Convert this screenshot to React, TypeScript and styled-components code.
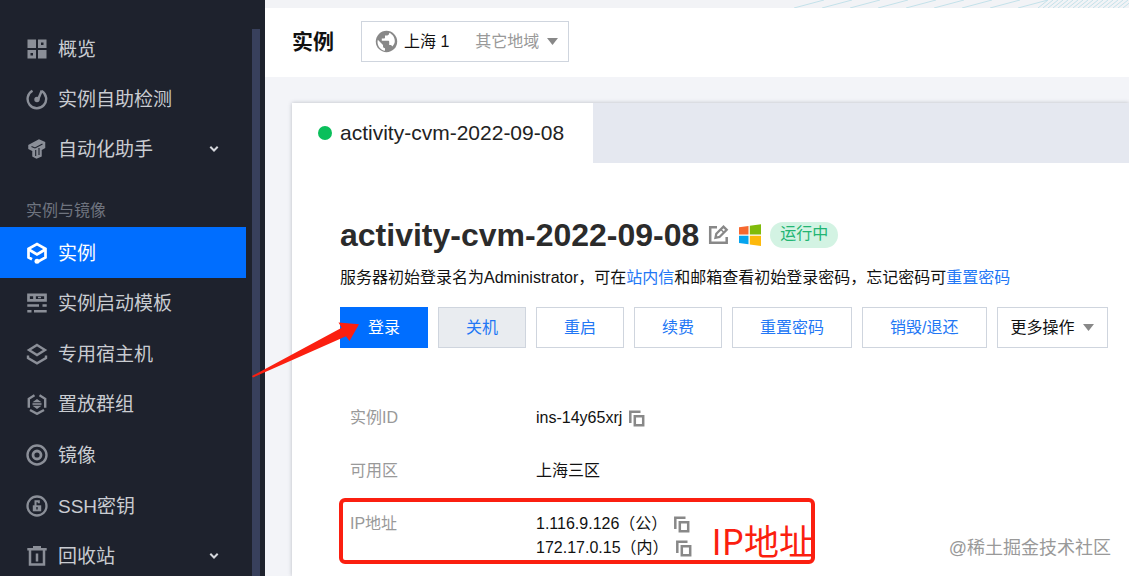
import React from "react";
import styled, { createGlobalStyle } from "styled-components";

const GlobalStyle = createGlobalStyle`
  * { box-sizing: border-box; }
  body {
    margin: 0;
    font-family: "Liberation Sans", "Noto Sans CJK SC", sans-serif;
    font-size: 16px;
    line-height: 24px;
    color: #111;
    background: #f3f4f8;
  }
  h1, h2, p, ul, dl, dd { margin: 0; padding: 0; }
  ul { list-style: none; }
  a { color: #2277f5; text-decoration: none; }
  button, select { font: inherit; cursor: pointer; }
  svg { display: block; flex: none; }
`;

const Page = styled.div`
  position: relative;
  display: flex;
  height: 100vh;
  overflow: hidden;
`;

/* Sidebar */

const Sidebar = styled.aside`
  display: flex;
  flex: none;
  gap: 6px;
  padding-right: 5px;
  background: #1e222d;
`;

const Nav = styled.nav`
  width: 246px;
  padding-top: 23px;
`;

const ScrollThumb = styled.div`
  width: 8px;
  margin-top: 29px;
  background: #38405c;
`;

const NavGroup = styled.ul<{ $height: number }>`
  display: grid;
  grid-auto-rows: 1fr;
  min-height: ${(p) => p.$height}px;
`;

const GroupTitle = styled.h2`
  height: 54px;
  padding: 26px 26px 0;
  font-size: 16px;
  font-weight: 400;
  color: #6f747f;
`;

const NavLink = styled.a<{ $active?: boolean }>`
  display: flex;
  align-items: center;
  gap: 10px;
  height: 100%;
  padding: 1px 26px 0;
  font-size: 19px;
  color: ${(p) => (p.$active ? "#fff" : "#c9ccd1")};
  background: ${(p) => (p.$active ? "#006eff" : "transparent")};

  > svg:first-child { color: ${(p) => (p.$active ? "#fff" : "#8b8f98")}; }
  > svg:last-child { margin-left: auto; }
  > span { padding-top: 2px; }
`;

/* Main area */

const Main = styled.main`
  display: flex;
  flex: 1;
  flex-direction: column;
  min-width: 0;
`;

const Banner = styled.div`
  display: flex;
  flex: none;
  justify-content: flex-end;
  height: 8px;
  overflow: hidden;
  background: #f2f3f6;
`;

const Header = styled.header`
  display: flex;
  flex: none;
  align-items: center;
  gap: 27px;
  height: 69px;
  padding: 0 27px 2px;
  background: #fff;
`;

const PageTitle = styled.h2`
  font-size: 21px;
  font-weight: 700;
`;

const RegionBox = styled.label`
  display: flex;
  align-items: center;
  gap: 6px;
  height: 41px;
  padding: 0 10px 0 13px;
  border: 1px solid #cfd5de;
  background: #fff;
`;

const SelectWrap = styled.span`
  display: flex;
  align-items: center;
  gap: 8px;
  margin-left: 20px;
`;

const RegionSelect = styled.select`
  width: 64px;
  padding: 0;
  border: 0;
  appearance: none;
  color: #999;
  background: transparent;
`;

const Card = styled.section`
  flex: 1;
  margin: 26px 0 0 27px;
  background: #fff;
  box-shadow: 0 0 4px rgba(54, 58, 80, 0.3);
`;

const TabBar = styled.div`
  display: flex;
  height: 60px;
  background: #e5e8f0;
`;

const Tab = styled.button`
  display: flex;
  align-items: center;
  gap: 8px;
  padding: 0 29px 0 26px;
  border: 0;
  font-size: 21px;
  color: #222;
  background: #fff;
`;

const Dot = styled.span`
  width: 14px;
  height: 14px;
  border-radius: 50%;
  background: #0abf5b;
`;

const Content = styled.div`
  padding: 52px 20px 0 48px;
`;

const TitleRow = styled.div`
  display: flex;
  align-items: center;
  gap: 9px;
  height: 40px;
`;

const InstanceName = styled.h1`
  font-size: 32px;
  line-height: 40px;
  color: #2b2b2b;
  white-space: nowrap;
`;

const IconButton = styled.button`
  padding: 0;
  border: 0;
  color: #888;
  background: none;
`;

const Status = styled.span`
  padding: 0 10px 2px;
  border-radius: 13px;
  color: #22b573;
  background: #d3f3e3;
`;

const Hint = styled.p`
  margin-top: 11px;
  white-space: nowrap;
`;

const Actions = styled.div`
  position: relative;
  display: flex;
  gap: 10px;
  margin-top: 17px;
`;

const looks = {
  primary: "color: #fff; background: #006eff; border-color: #006eff;",
  muted: "color: #2277f5; background: #e9ecf0;",
  plain: "color: #2277f5; background: #fff;",
  menu: "color: #111; background: #fff; padding: 0 13px;",
};

const Button = styled.button<{ $look?: keyof typeof looks }>`
  display: flex;
  align-items: center;
  gap: 8px;
  height: 41px;
  padding: 0 27px;
  border: 1px solid #cfd5de;
  white-space: nowrap;
  ${(p) => looks[p.$look ?? "plain"]}
`;

const Pointer = styled.svg`
  position: absolute;
  left: -89px;
  top: 14px;
  z-index: 2;
  pointer-events: none;
`;

const Details = styled.dl`
  display: flex;
  flex-direction: column;
  gap: 29px;
  margin-top: 58px;
`;

const DetailRow = styled.div`
  position: relative;
  display: flex;
`;

const Term = styled.dt`
  width: 196px;
  padding-left: 10px;
  color: #999;
`;

const Value = styled.dd`
  display: flex;
  flex-direction: column;
`;

const ValueLine = styled.span`
  display: flex;
  align-items: center;
  gap: 7px;
`;

const Callout = styled.div`
  position: absolute;
  inset: -14px auto -4px -1px;
  display: flex;
  align-items: flex-end;
  justify-content: flex-end;
  width: 476px;
  border: 4px solid #fb1f10;
  border-radius: 6px;
  font-family: "Noto Sans CJK SC", sans-serif;
  font-size: 35px;
  line-height: 40px;
  color: #fb1f10;
  pointer-events: none;

  > span { margin-right: -3px; }
`;

const Watermark = styled.div`
  position: absolute;
  right: 18px;
  bottom: 16px;
  font-size: 18px;
  color: #999;
`;

/* Icons */

const Icon = ({ children, size = 22 }: { children: React.ReactNode; size?: number }) => (
  <svg width={size} height={size} viewBox="0 0 22 22" fill="none" stroke="currentColor" strokeWidth="2.400" aria-hidden="true">
    {children}
  </svg>
);

const OverviewIcon = () => (
  <Icon>
    <path d="M1.500 1.500h8.500v8.500H1.500zM12 12h8.500v8.500H12z" fill="currentColor" stroke="none" />
    <path d="M13.500 3h5.500v5.500h-5.500zM3 13.500h5.500V19H3z" strokeWidth="3" />
  </Icon>
);

const CheckIcon = () => (
  <Icon>
    <path d="M6.500 2.700A9.300 9.300 0 1 0 15.800 3" strokeWidth="2.400" />
    <path d="M15.800 2.500 12.300 11" strokeWidth="2.400" />
    <circle cx="11" cy="11.500" r="2.700" fill="currentColor" stroke="none" />
  </Icon>
);

const AssistantIcon = () => (
  <Icon>
    <path d="M3 7.500 13 2l5.500 2.500v5l-3.500 2v6.500L10.500 20 7 18v-5.500L3 10.500z" fill="currentColor" stroke="currentColor" strokeWidth="1.500" />
    <path d="M5.500 8.500 9 10l7.500-4M9.700 12v6M13 10v7" stroke="#1e222d" strokeWidth="1.100" />
  </Icon>
);

const InstanceIcon = () => (
  <Icon>
    <path d="M6 17.300 2.500 15.400V6.700L11 2l8.500 4.700v8.700L12 19.600" strokeWidth="2.700" />
    <path d="M2.800 7.500l8.200 5 8.200-5" strokeWidth="2.700" />
    <circle cx="11" cy="19.300" r="2.500" fill="currentColor" stroke="none" />
  </Icon>
);

const TemplateIcon = () => (
  <Icon>
    <path d="M2.500 2.800h17v5.500h-17zM8.500 3v5" strokeWidth="2.700" />
    <path d="M12 5.500h3" strokeWidth="1.500" />
    <path d="M1.300 13.500H13M16.500 13.500h4.200M1.300 19.300H5.500M8 19.300h12.700" strokeWidth="2.600" />
  </Icon>
);

const HostIcon = () => (
  <Icon>
    <path d="M11 2 19 7l-8 5-8-5z" />
    <path d="M2 12.500v2.500l9 5.300 9-5.300v-2.500" />
  </Icon>
);

const GroupIcon = () => (
  <Icon>
    <path d="M8.500 2.300 2.800 5.800v9M13.500 2.300 19.200 5.800v9M4 17l7 3.800L18 17" />
    <path d="m11 6 4.500 3.300h-9zM11 16l4.500-3.300h-9z" fill="currentColor" stroke="none" />
    <path d="M6.500 11h9" strokeWidth="1.600" />
  </Icon>
);

const ImageIcon = () => (
  <Icon>
    <circle cx="11" cy="11" r="9.500" />
    <circle cx="11" cy="11" r="4" strokeWidth="2.800" />
  </Icon>
);

const KeyIcon = () => (
  <Icon>
    <circle cx="11" cy="11" r="9.500" strokeWidth="2.300" />
    <path d="M9.500 11V6.300h3.300v2" strokeWidth="2" />
    <path d="M6.800 10.300h8.400v6H6.800z" fill="currentColor" stroke="none" />
    <path d="M11 12v2.500" stroke="#1e222d" strokeWidth="1.400" />
  </Icon>
);

const TrashIcon = () => (
  <Icon>
    <path d="M1.300 4.300h19.400M7 2.300h8M4 5v14.500h14V5M11 8.500v8" strokeWidth="2.500" />
  </Icon>
);

const ChevronIcon = () => (
  <svg width="12" height="8" viewBox="0 0 12 8" fill="none" stroke="#d5d7dc" strokeWidth="2" aria-hidden="true">
    <path d="m2.300 1.800 3.700 3.700 3.700-3.700" />
  </svg>
);

const Caret = () => (
  <svg width="11" height="7" viewBox="0 0 11 7" fill="#888" aria-hidden="true">
    <path d="M0 0h11L5.500 7z" />
  </svg>
);

const GlobeIcon = () => (
  <svg width="23" height="23" viewBox="0 0 23 23" aria-hidden="true">
    <circle cx="11.500" cy="11.500" r="10.700" fill="#888" />
    <path d="M2.800 9.800 8 15v1.200c0 1.200.9 2 2 2v2.600C5.600 20 2.500 16.200 2.500 11.700zM14.200 2.700v.6c0 1.200-.9 2.100-2.100 2.100H10v2.200c0 .6-.5 1-1.100 1H6.800v2.100h6.400c.6 0 1 .5 1 1.100v3.200h1.100c1 0 1.700.6 2 1.500 1.400-1.500 2.500-3.300 2.500-5.300 0-3.800-2.300-7.100-5.600-8.500z" fill="#fff" />
  </svg>
);

const EditIcon = () => (
  <svg width="22" height="20" viewBox="0 0 22 20" fill="none" stroke="currentColor" strokeWidth="2.500" aria-hidden="true">
    <path d="M9 2.200H2.200v15.600h16.500V12" />
    <path d="m7.500 12.800.8-4L15.500 1.700l3.200 3.100-7.200 7.200z" strokeWidth="2.300" />
    <path d="m13 4.500 3 3" strokeWidth="1.500" />
  </svg>
);

const WindowsIcon = () => (
  <svg width="22" height="22" viewBox="0 0 22 22" role="img" aria-label="Windows">
    <path d="M0 3.300 9.500 2v8.500H0z" fill="#f6682f" />
    <path d="M10.800 1.800 22 .3v10.200H10.800z" fill="#80bb0a" />
    <path d="M0 11.800h9.500v8.400L0 19z" fill="#06a4ee" />
    <path d="M10.800 11.800H22V22l-11.200-1.600z" fill="#fdb90c" />
  </svg>
);

const CopyButton = () => (
  <IconButton aria-label="复制">
    <svg width="16" height="17" viewBox="0 0 16 17" fill="none" stroke="#888" strokeWidth="2.500" aria-hidden="true">
      <path d="M1.300 13V1.800H11.500" />
      <path d="M5.800 6.300h8.400v8.900H5.800z" />
    </svg>
  </IconButton>
);

const BannerLines = () => (
  <svg width="335" height="8" viewBox="0 0 335 8" stroke="#c3e2ea" aria-hidden="true">
    {Array.from({ length: 9 }, (_, i) => (
      <path key={i} d={`M${i * 28} 8l30-8`} />
    ))}
    {Array.from({ length: 18 }, (_, i) => (
      <path key={i} d={`M${244 + i * 5} 8l10-8`} />
    ))}
  </svg>
);

interface Entry {
  label: string;
  icon: React.ComponentType;
  active?: boolean;
  expandable?: boolean;
}

const topEntries: Entry[] = [
  { label: "概览", icon: OverviewIcon },
  { label: "实例自助检测", icon: CheckIcon },
  { label: "自动化助手", icon: AssistantIcon, expandable: true },
];

const instanceEntries: Entry[] = [
  { label: "实例", icon: InstanceIcon, active: true },
  { label: "实例启动模板", icon: TemplateIcon },
  { label: "专用宿主机", icon: HostIcon },
  { label: "置放群组", icon: GroupIcon },
  { label: "镜像", icon: ImageIcon },
  { label: "SSH密钥", icon: KeyIcon },
  { label: "回收站", icon: TrashIcon, expandable: true },
];

const Entries = ({ items, height }: { items: Entry[]; height: number }) => (
  <NavGroup $height={height}>
    {items.map(({ label, icon: EntryIcon, active, expandable }) => (
      <li key={label}>
        <NavLink href="#" $active={active}>
          <EntryIcon />
          <span>{label}</span>
          {expandable && <ChevronIcon />}
        </NavLink>
      </li>
    ))}
  </NavGroup>
);

export default function App() {
  return (
    <>
      <GlobalStyle />
      <Page>
        <Sidebar>
          <Nav>
            <Entries items={topEntries} height={150} />
            <GroupTitle>实例与镜像</GroupTitle>
            <Entries items={instanceEntries} height={354} />
          </Nav>
          <ScrollThumb />
        </Sidebar>
        <Main>
          <Banner>
            <BannerLines />
          </Banner>
          <Header>
            <PageTitle>实例</PageTitle>
            <RegionBox>
              <GlobeIcon />
              <span>上海 1</span>
              <SelectWrap>
                <RegionSelect>
                  <option>其它地域</option>
                </RegionSelect>
                <Caret />
              </SelectWrap>
            </RegionBox>
          </Header>
          <Card>
            <TabBar>
              <Tab>
                <Dot />
                activity-cvm-2022-09-08
              </Tab>
            </TabBar>
            <Content>
              <TitleRow>
                <InstanceName>activity-cvm-2022-09-08</InstanceName>
                <IconButton aria-label="编辑">
                  <EditIcon />
                </IconButton>
                <WindowsIcon />
                <Status>运行中</Status>
              </TitleRow>
              <Hint>
                服务器初始登录名为Administrator，可在<a href="#">站内信</a>和邮箱查看初始登录密码，忘记密码可<a href="#">重置密码</a>
              </Hint>
              <Actions>
                <Button $look="primary">登录</Button>
                <Button $look="muted">关机</Button>
                <Button>重启</Button>
                <Button>续费</Button>
                <Button>重置密码</Button>
                <Button>销毁/退还</Button>
                <Button $look="menu" aria-haspopup="menu">
                  更多操作
                  <Caret />
                </Button>
                <Pointer width="110" height="58" viewBox="0 0 110 58" fill="#fb1f10" aria-hidden="true">
                  <path d="M1 55 90.700 6.700 87.500 1.500 108 3.300 98.500 20 95 15.300 2 56.500z" />
                </Pointer>
              </Actions>
              <Details>
                <DetailRow>
                  <Term>实例ID</Term>
                  <Value>
                    <ValueLine>
                      ins-14y65xrj
                      <CopyButton />
                    </ValueLine>
                  </Value>
                </DetailRow>
                <DetailRow>
                  <Term>可用区</Term>
                  <Value>上海三区</Value>
                </DetailRow>
                <DetailRow>
                  <Term>IP地址</Term>
                  <Value>
                    <ValueLine>
                      1.116.9.126（公）
                      <CopyButton />
                    </ValueLine>
                    <ValueLine>
                      172.17.0.15（内）
                      <CopyButton />
                    </ValueLine>
                  </Value>
                  <Callout>
                    <span>IP地址</span>
                  </Callout>
                </DetailRow>
              </Details>
            </Content>
          </Card>
        </Main>
        <Watermark>@稀土掘金技术社区</Watermark>
      </Page>
    </>
  );
}
